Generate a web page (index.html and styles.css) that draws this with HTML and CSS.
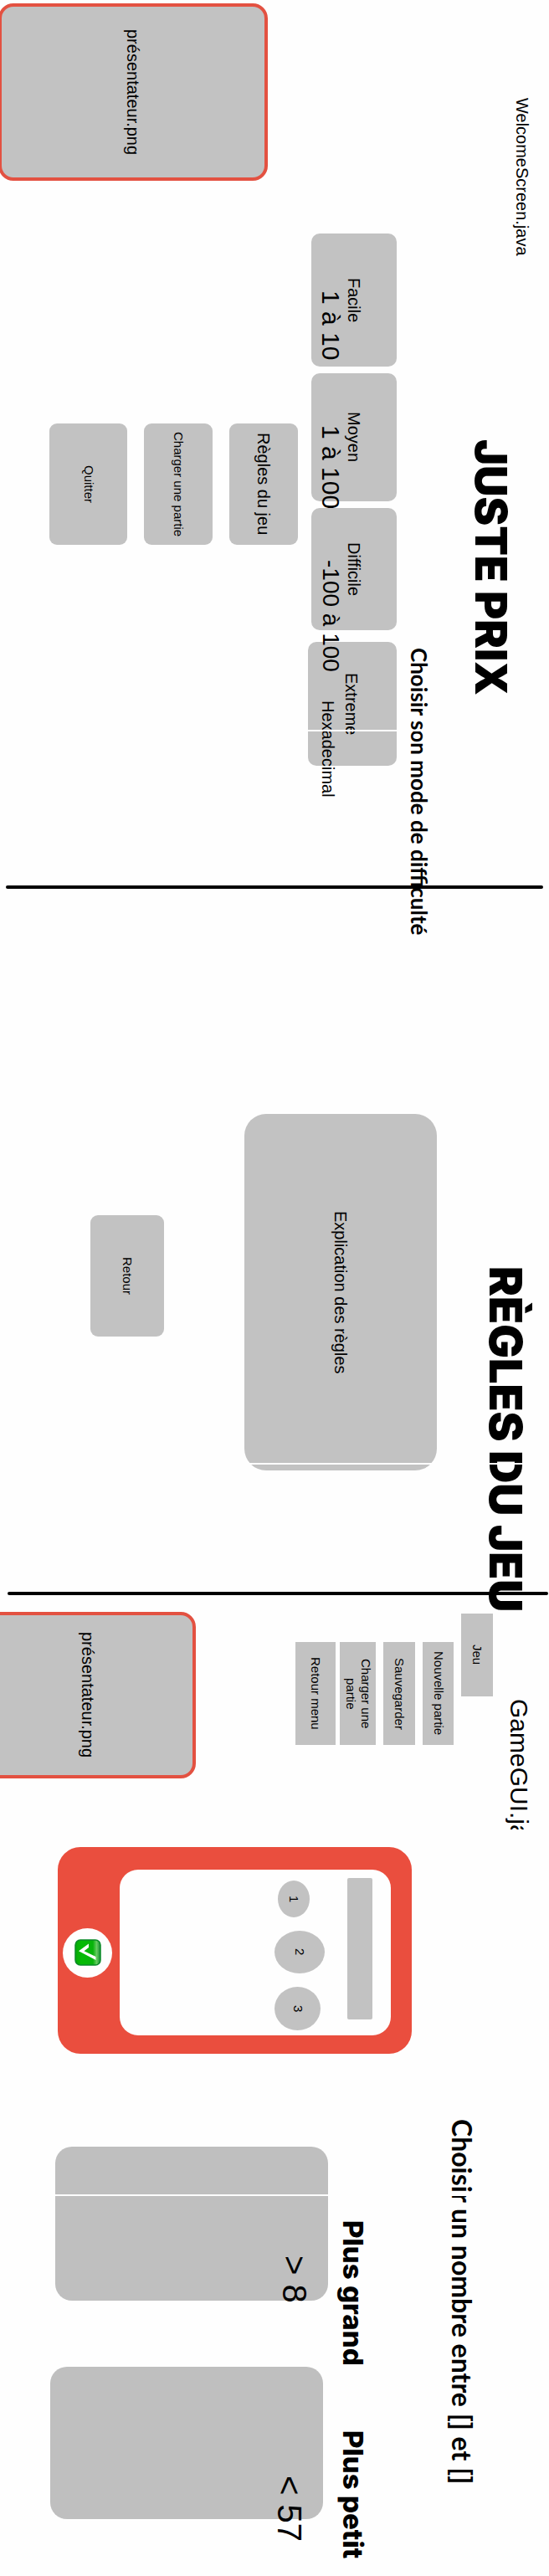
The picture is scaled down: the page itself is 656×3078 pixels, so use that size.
FILE: index.html
```html
<!DOCTYPE html>
<html lang="fr">
<head>
<meta charset="utf-8">
<meta name="viewport" content="width=device-width, initial-scale=1">
<title>Juste Prix</title>
<link rel="stylesheet" href="styles.css">
</head>
<body>
<main>
  <section class="screen welcome">
    <div class="welcome-left">
      <div class="presenter">présentateur.png</div>
      <nav class="menu">
        <button class="menu-button menu-button-wide small" type="button">Quitter</button>
        <button class="menu-button small" type="button">Charger une partie</button>
        <button class="menu-button" type="button">Règles du jeu</button>
      </nav>
    </div>
    <div class="levels">
      <button class="level level-easy" type="button"><span class="level-name">Facile</span><span class="level-range">1 à 10</span></button>
      <button class="level level-medium" type="button"><span class="level-name">Moyen</span><span class="level-range">1 à 100</span></button>
      <button class="level level-hard" type="button"><span class="level-name">Difficile</span><span class="level-range range-medium">-100 à 100</span></button>
      <button class="level level-extreme" type="button"><span class="level-name">Extreme</span><span class="level-range range-small">Hexadecimal</span></button>
    </div>
    <h2 class="vertical spill choose">Choisir son mode de difficulté</h2>
    <h1 class="vertical spill title welcome-title">JUSTE PRIX</h1>
    <p class="vertical spill file">WelcomeScreen.java</p>
  </section>

  <hr class="rule">

  <section class="screen rules">
    <button class="back small" type="button">Retour</button>
    <div class="rules-text">Explication des règles</div>
    <h1 class="vertical spill title rules-title">RÈGLES DU JEU</h1>
  </section>

  <hr class="rule rule-right">

  <section class="screen game">
    <div class="game-top">
      <div class="presenter presenter-game">présentateur.png</div>
      <nav class="game-menu small">
        <button class="entry entry-wide" type="button">Retour menu</button>
        <button class="entry entry-double" type="button">Charger une partie</button>
        <button class="entry" type="button">Sauvegarder</button>
        <button class="entry" type="button">Nouvelle partie</button>
        <button class="entry entry-root" type="button">Jeu</button>
      </nav>
      <p class="vertical game-file">GameGUI.java</p>
    </div>

    <div class="phone">
      <button class="confirm" type="button" aria-label="Valider">
        <svg class="confirm-icon" viewBox="0 0 32 32" aria-hidden="true">
          <defs>
            <linearGradient id="green" x1="0" y1="0" x2="1" y2="0">
              <stop offset="0" stop-color="#08a808"/>
              <stop offset="0.25" stop-color="#04bb04"/>
              <stop offset="0.7" stop-color="#08b30b"/>
              <stop offset="0.85" stop-color="#65cc60"/>
              <stop offset="1" stop-color="#128b2d"/>
            </linearGradient>
          </defs>
          <rect x="1" y="1" width="30" height="30" rx="6" fill="url(#green)" stroke="#0a8a28" stroke-width="1.5"/>
          <path d="M17 5.5V10L11.500 14.200L25.500 21V25L5 14.200Z" fill="#fff"/>
        </svg>
      </button>
      <div class="phone-screen">
        <div class="keys small">
          <button class="key key-one" type="button">1</button>
          <button class="key key-two" type="button">2</button>
          <button class="key key-three" type="button">3</button>
        </div>
        <input class="readout" type="text" aria-label="Nombre choisi">
      </div>
    </div>

    <div class="guesses">
      <div class="guess-list">
        <article class="guess">
          <div class="card card-greater">&gt; 8</div>
          <h3 class="vertical spill guess-title">Plus grand</h3>
        </article>
        <article class="guess guess-lower">
          <div class="card card-lower">&lt; 57</div>
          <h3 class="vertical spill guess-title">Plus petit</h3>
        </article>
      </div>
      <h2 class="vertical spill hint">Choisir un nombre entre [] et []</h2>
    </div>
  </section>
</main>
</body>
</html>
```

FILE: styles.css
```css
* {
  box-sizing: border-box;
}

body {
  margin: 0;
  background: #fefefe;
  color: #000;
  font: 20px/24px "Liberation Sans", Arial, sans-serif;
}

h1, h2, h3, p {
  margin: 0;
}

button, input {
  margin: 0;
  padding: 0;
  border: 0;
  background: #c2c2c2;
  color: inherit;
  font: inherit;
}

button, .presenter, .rules-text, .card, .readout, .vertical {
  writing-mode: vertical-rl;
}

.vertical {
  justify-self: left;
  white-space: nowrap;
}

/* Labels that may run past the end of their screen */
.spill {
  height: 0;
}

.small {
  font-size: 15px;
  line-height: 18px;
}

.screen {
  position: relative;
}

/* Page seam drawn over a screen */
.screen::after {
  content: "";
  position: absolute;
  z-index: 2;
  right: 0;
  left: 0;
  height: 2px;
  background: #fefefe;
}

.rule {
  height: 4px;
  margin: 0 7px;
  border: 0;
  border-radius: 2px;
  background: #000;
}

.rule-right {
  margin: 0 1px 0 9px;
}

.presenter {
  display: flex;
  align-items: center;
  justify-content: center;
  border: 4px solid #e35141;
  border-radius: 18px;
  background: #c2c2c2;
}

.title {
  font: 900 52px/52px Inter, sans-serif;
}

/* Welcome screen */
.welcome {
  display: grid;
  grid-template-columns: 366fr 108fr 86fr 52fr 44fr;
  align-items: start;
  min-height: 1058px;
}

.welcome::after {
  top: 872px;
}

.welcome-left {
  padding: 4px 10px 0 0;
}

.welcome-left .presenter {
  width: 322px;
  height: 212px;
  margin-left: -2px;
}

.menu {
  display: flex;
  gap: 20px;
  margin-top: 290px;
  padding-left: 59px;
}

.menu-button {
  flex: 82;
  height: 145px;
  border-radius: 9px;
}

.menu-button-wide {
  flex: 93;
}

.levels {
  display: flex;
  flex-direction: column;
  gap: 8px;
  padding: 279px 0 0 6px;
}

.level {
  padding: 0 32px 0 0;
  border-radius: 10px;
  text-align: start;
  white-space: nowrap;
}

.level-name, .level-range {
  display: block;
}

.level-name {
  text-align: center;
}

/* Ranges stay above the next level's button */
.level-range {
  position: relative;
  z-index: 1;
  padding-top: 62px;
  font-size: 30px;
  line-height: 32px;
}

.level-easy {
  height: 159px;
}

.level-easy .level-range {
  padding-top: 68px;
}

.level-medium {
  height: 153px;
}

.level-hard {
  height: 146px;
}

.level-extreme {
  height: 148px;
  margin: 6px 0 0 -4px;
  padding-right: 34px;
}

.range-medium {
  font-size: 28px;
}

.range-small {
  padding-top: 70px;
  font-size: 20px;
}

.choose {
  margin-top: 774px;
  font: 700 26px/54px Lato, sans-serif;
}

.welcome-title {
  margin-top: 525px;
}

.file {
  margin-top: 117px;
}

/* Rules screen */
.rules {
  display: grid;
  grid-template-columns: 88fr 96fr 230fr 56fr 78fr;
  align-items: start;
  min-height: 840px;
  padding-left: 108px;
}

.rules::after {
  top: 686px;
}

.back {
  grid-column: 1;
  height: 145px;
  margin-top: 390px;
  border-radius: 9px;
}

.rules-text {
  display: flex;
  grid-column: 3;
  align-items: center;
  justify-content: center;
  height: 426px;
  margin-top: 269px;
  border-radius: 26px;
  background: #c2c2c2;
}

.rules-title {
  grid-column: 5;
  margin-top: 451px;
  font-size: 54px;
}

/* Game screen */
.game {
  padding: 20px 0 68px;
}

.game::after {
  top: 716px;
}

.game-top {
  display: grid;
  grid-template-columns: 234fr 119fr 236fr 15fr 52fr;
  align-items: start;
}

.presenter-game {
  height: 199px;
  margin-left: -24px;
}

.game-menu {
  display: flex;
  grid-column: 3;
  gap: 9px;
  align-items: flex-start;
  padding-top: 2px;
}

.entry {
  flex: 37;
  height: 123px;
  margin-top: 34px;
}

.entry-wide {
  flex: 47;
  margin-right: -4px;
}

.entry-double {
  flex: 43;
}

.entry-root {
  height: 99px;
  margin-top: 0;
}

.game-file {
  grid-column: 5;
  height: 156px;
  margin-top: 104px;
  overflow: hidden;
  font-size: 30px;
  line-height: 32px;
}

.phone {
  display: flex;
  gap: 9px;
  align-items: center;
  height: 247px;
  margin: 21px 25% 0 69px;
  padding: 27px 25px 22px 6px;
  border-radius: 27px;
  background: #ea4e3e;
}

.confirm {
  display: grid;
  flex: none;
  place-items: center;
  width: 59px;
  height: 59px;
  border-radius: 50%;
  background: #fefefe;
}

.confirm-icon {
  width: 32px;
  height: 32px;
}

.phone-screen {
  display: flex;
  flex: 1;
  gap: 25px;
  justify-content: flex-end;
  height: 198px;
  padding: 10px 22px 0 0;
  border-radius: 22px;
  background: #fefefe;
}

.keys {
  display: flex;
  flex-direction: column;
  gap: 16px;
  width: 62px;
  padding-top: 3px;
}

.key {
  border-radius: 50%;
}

.key-one {
  width: 38px;
  height: 44px;
  margin-left: 4px;
}

.key-two {
  width: 60px;
  height: 51px;
}

.key-three {
  width: 55px;
  height: 52px;
}

.readout {
  width: 30px;
  height: 169px;
  border-radius: 2px;
}

.guesses {
  display: grid;
  grid-template-columns: 532fr 124fr;
  align-items: start;
  margin-top: 78px;
}

.guess-list {
  padding: 33px 0 0 66px;
}

.guess {
  display: flex;
  gap: 10px;
}

.guess-lower {
  gap: 16px;
  margin: 79px 0 0 -6px;
}

.card {
  flex: 0 1 326px;
  height: 184px;
  padding: 130px 18px 0 0;
  border-radius: 20px;
  background: #bfbfbf;
  font-size: 40px;
  line-height: 44px;
  white-space: nowrap;
}

.card-lower {
  height: 182px;
}

.guess-title {
  margin-top: 88px;
  font: 800 33px/40px Inter, sans-serif;
}

.guess-lower .guess-title {
  margin-top: 76px;
}

.hint {
  font: 700 32px/40px Lato, sans-serif;
}
```
